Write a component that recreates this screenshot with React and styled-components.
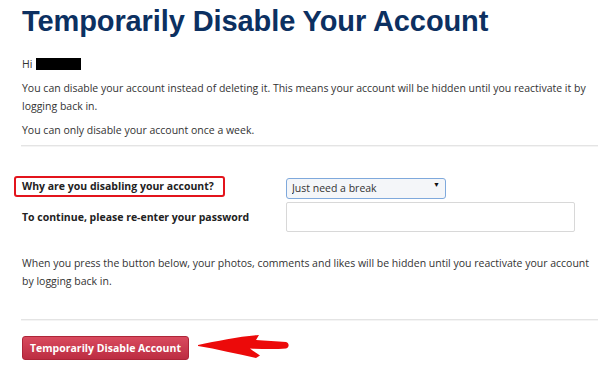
import React from "react";
import styled, { createGlobalStyle } from "styled-components";

const GlobalStyle = createGlobalStyle`
	html, body {
		margin: 0;
		padding: 0;
		background: #ffffff;
	}
	body {
		font-family: "Open Sans", "Noto Sans", sans-serif;
		color: #333333;
	}
`;

function Arrow() {
	return (
		<ArrowSvg width="94" height="26" viewBox="0 0 94 26">
			<path
				d="M1 11 C 20 7, 44 2, 62 1 L 59 6 C 68 7, 80 7, 89 8 C 92.5 9, 92.5 13.5, 89 14.5 C 78 15.5, 64 15, 53 14.5 C 56 17, 60 19.5, 63 21.5 L 59 24 C 40 20, 20 15, 1 12 Z"
				fill="#ec0a0a"
			/>
		</ArrowSvg>
	);
}

function App() {
	const [reason, setReason] = React.useState("break");

	return (
		<>
			<GlobalStyle />
			<Page>
				<Title>Temporarily Disable Your Account</Title>
				<Greeting>
					Hi <Redacted />
				</Greeting>
				<Text>
					You can disable your account instead of deleting it. This means
					your account will be hidden until you reactivate it by logging
					back in.
				</Text>
				<Text>You can only disable your account once a week.</Text>
				<Divider />

				<Form>
					<Label highlight>Why are you disabling your account?</Label>
					<SelectWrap>
						<Select value={reason} onChange={(e) => setReason(e.target.value)}>
							<option value="break">Just need a break</option>
							<option value="busy">Too busy / too distracting</option>
							<option value="other">Something else</option>
						</Select>
						<Caret>▼</Caret>
					</SelectWrap>
					<Label>To continue, please re-enter your password</Label>
					<Password type="password" />
				</Form>

				<Note>
					When you press the button below, your photos, comments and likes
					will be hidden until you reactivate your account by logging back in.
				</Note>
				<Divider />

				<Actions>
					<DisableBtn>Temporarily Disable Account</DisableBtn>
					<Arrow />
				</Actions>
			</Page>
		</>
	);
}

const Page = styled.div`
	width: 577px;
	padding: 4px 0 0 21px;
`;

const Title = styled.h1`
	margin: 0 0 17px 1px;
	font-family: "Liberation Sans", Arial, sans-serif;
	font-size: 29px;
	line-height: 34px;
	font-weight: 700;
	color: #0c3061;
	letter-spacing: -0.1px;
`;

const Greeting = styled.p`
	margin: 0 0 6px 1px;
	font-size: 10.5px;
	line-height: 18px;
	display: flex;
	align-items: center;
	gap: 4px;
`;

const Redacted = styled.span`
	display: inline-block;
	width: 45px;
	height: 12px;
	background: #000000;
`;

const Text = styled.p`
	margin: 0 0 6px 1px;
	font-size: 10.5px;
	line-height: 18px;
`;

const Divider = styled.hr`
	margin: 0;
	border: none;
	border-top: 1px solid #e4e4e4;
	box-shadow: 0 1px 0 #f4f4f4;
`;

const Form = styled.div`
	display: grid;
	grid-template-columns: 265px 289px;
	align-items: center;
	row-gap: 6px;
	margin-top: 29px;
`;

const Label = styled.span`
	position: relative;
	justify-self: start;
	margin-left: 1px;
	font-size: 10.5px;
	font-weight: 700;
	line-height: 18px;
	color: #222222;

	${({ highlight }) =>
		highlight &&
		`
		&::after {
			content: "";
			position: absolute;
			left: -8px;
			top: -1px;
			width: 207px;
			height: 17px;
			border: 2px solid #e3141c;
			border-radius: 3px;
		}
	`}
`;

const SelectWrap = styled.div`
	position: relative;
	width: 160px;
	height: 21px;
`;

const Select = styled.select`
	appearance: none;
	width: 100%;
	height: 100%;
	margin: 0;
	padding: 0 0 0 5px;
	border: 1px solid #7fa9dc;
	border-radius: 3px;
	background: #f4f6f9;
	font-family: "Open Sans", "Noto Sans", sans-serif;
	font-size: 10.5px;
	color: #333333;
	outline: none;
`;

const Caret = styled.span`
	position: absolute;
	right: 6px;
	top: 5px;
	font-size: 7px;
	color: #111111;
	pointer-events: none;
`;

const Password = styled.input`
	box-sizing: border-box;
	width: 289px;
	height: 30px;
	margin: 0;
	border: 1px solid #d8d8d8;
	border-radius: 2px;
	background: #ffffff;
	outline: none;
`;

const Note = styled.p`
	margin: 22px 0 29px 1px;
	font-size: 10.5px;
	line-height: 18px;
`;

const Actions = styled.div`
	display: flex;
	align-items: center;
	gap: 8px;
	margin-top: 16px;
`;

const DisableBtn = styled.button`
	width: 167px;
	height: 24px;
	margin-left: 1px;
	padding: 0;
	border: 1px solid #ad2538;
	border-radius: 3px;
	background: linear-gradient(#d94a5e, #bc2d42);
	color: #ffffff;
	font-family: "Open Sans", "Noto Sans", sans-serif;
	font-size: 10.5px;
	font-weight: 700;
	cursor: pointer;
`;

const ArrowSvg = styled.svg`
	display: block;
	margin-top: -2px;
`;

export default App;
